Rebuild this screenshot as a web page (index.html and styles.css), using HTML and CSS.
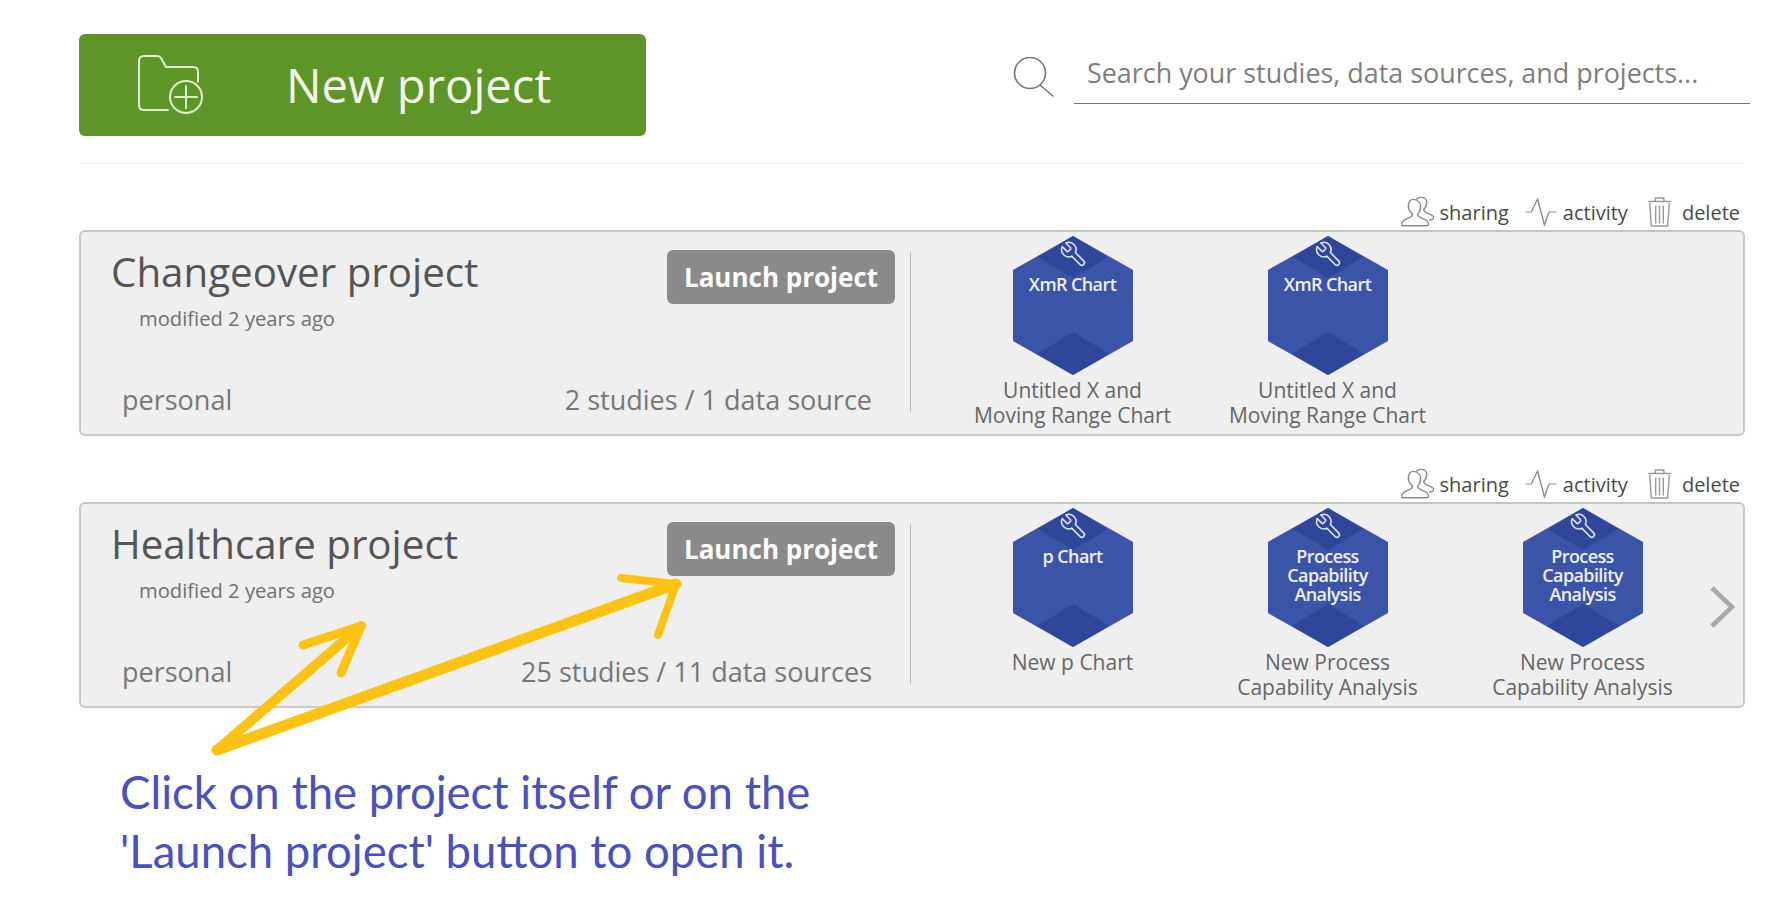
FILE: index.html
```html
<!DOCTYPE html>
<html lang="en">
<head>
<meta charset="utf-8">
<title>Projects</title>
<link rel="stylesheet" href="styles.css">
</head>
<body>
<svg width="0" height="0" class="defs">
  <defs>
    <g id="hexagon">
      <polygon points="60,0 120,34 120,105 60,139 0,105 0,34" fill="#3c54a8"/>
      <polygon points="60,0 95,21 60,42 25,21" fill="#30469a"/>
      <polygon points="60,96 96,118 60,139 24,118" fill="#30469a"/>
      <g transform="translate(75 4) scale(-1.2 1.2)" fill="none" stroke="#dfe5f5" stroke-width="1.3" stroke-linejoin="round">
        <path d="M14.7 6.3a1 1 0 0 0 0 1.4l1.6 1.6a1 1 0 0 0 1.4 0l3.77-3.77a6 6 0 0 1-7.94 7.94l-6.91 6.91a2.12 2.12 0 0 1-3-3l6.91-6.91a6 6 0 0 1 7.94-7.94l-3.76 3.76z"/>
      </g>
    </g>
    <g id="i-users" fill="none" stroke="#8c8c8c" stroke-width="1.2" stroke-linejoin="round" stroke-linecap="round">
      <path d="M14 3.500c3.500-3 8-1 8 3.500 0 2.500-1 4.500-2.500 6 0 1.500 1 2 3 3 2.500 1 4.500 2 5.500 3.500-.3 1.500-1.500 2.500-3.500 2.500"/>
      <path d="M11 4c4 0 6 3 6 6.500 0 3-1 5-2.500 6.500 0 1.500 1.500 2.500 4 3.500 3 1.200 4.500 2.500 5 4.500 .2 1-.3 2-1.500 2H3c-1.500 0-2-1-1.500-2 .7-2 2.500-3.400 5-4.500 2.500-1 4-2 4-3.500C9 15.500 7 13.500 7 10.500 7 7 8 4 11 4z"/>
    </g>
    <g id="i-activity" fill="none" stroke="#8c8c8c" stroke-width="1.2" stroke-linejoin="miter" stroke-linecap="round">
      <path d="M1 14h4.500L11 1l6 26 4-13h6"/>
    </g>
    <g id="i-trash" fill="none" stroke="#9a9a9a" stroke-width="1.3" stroke-linejoin="round">
      <path d="M2 5.500h21M8.500 5V2h8v3M3.500 7l1.500 23h15l1.500-23"/>
      <path d="M9 9.500v18M12.500 9.500v18M16 9.500v18"/>
    </g>
  </defs>
</svg>

<main class="page">
  <header class="topbar">
    <button class="new-project" type="button">
      <svg class="folder-icon" viewBox="0 0 65 60" width="65" height="60" fill="none" stroke="#e0f0cc" stroke-width="2" stroke-linejoin="round" stroke-linecap="round">
        <path d="M30 55H6c-3 0-5-2-5-5V6c0-3 2-5 5-5h13c2 0 3 .5 4 2l5 9h27c3 0 5 2 5 5v10"/>
        <circle cx="48" cy="42" r="16"/>
        <path d="M48 31v22M37 42h22"/>
      </svg>
      <span class="new-project-label">New project</span>
    </button>
    <div class="search">
      <svg class="search-icon" viewBox="0 0 41 40" width="41" height="40" fill="none" stroke="#777" stroke-width="1.600" stroke-linecap="round">
        <circle cx="17" cy="16" r="15.500"/>
        <path d="M27 28L40 39"/>
      </svg>
      <div class="search-field">Search your studies, data sources, and projects...</div>
    </div>
  </header>
  <div class="rule"></div>

  <section class="project">
    <nav class="actions">
      <span class="action"><svg class="ic-users" viewBox="1 1 27 28" width="33" height="32" preserveAspectRatio="none"><use href="#i-users"/></svg>sharing</span>
      <span class="action"><svg class="ic-activity" viewBox="0 0 28 28" width="32" height="28" preserveAspectRatio="none"><use href="#i-activity"/></svg>activity</span>
      <span class="action action-delete"><svg class="ic-trash" viewBox="1 0 23 32" width="25" height="32" preserveAspectRatio="none"><use href="#i-trash"/></svg>delete</span>
    </nav>
    <article class="card">
      <div class="card-info">
        <div class="card-head">
          <h2 class="title">Changeover project</h2>
          <button class="launch" type="button">Launch project</button>
        </div>
        <div class="modified">modified 2 years ago</div>
        <div class="card-foot">
          <span>personal</span>
          <span>2 studies / 1 data source</span>
        </div>
      </div>
      <div class="studies">
        <div class="study">
          <div class="hex"><svg viewBox="0 0 120 139" width="120" height="139"><use href="#hexagon"/></svg><span class="hex-label">XmR Chart</span></div>
          <p class="caption">Untitled X and<br>Moving Range Chart</p>
        </div>
        <div class="study">
          <div class="hex"><svg viewBox="0 0 120 139" width="120" height="139"><use href="#hexagon"/></svg><span class="hex-label">XmR Chart</span></div>
          <p class="caption">Untitled X and<br>Moving Range Chart</p>
        </div>
      </div>
    </article>
  </section>

  <section class="project">
    <nav class="actions">
      <span class="action"><svg class="ic-users" viewBox="1 1 27 28" width="33" height="32" preserveAspectRatio="none"><use href="#i-users"/></svg>sharing</span>
      <span class="action"><svg class="ic-activity" viewBox="0 0 28 28" width="32" height="28" preserveAspectRatio="none"><use href="#i-activity"/></svg>activity</span>
      <span class="action action-delete"><svg class="ic-trash" viewBox="1 0 23 32" width="25" height="32" preserveAspectRatio="none"><use href="#i-trash"/></svg>delete</span>
    </nav>
    <article class="card">
      <div class="card-info">
        <div class="card-head">
          <h2 class="title">Healthcare project</h2>
          <button class="launch" type="button">Launch project</button>
        </div>
        <div class="modified">modified 2 years ago</div>
        <div class="card-foot">
          <span>personal</span>
          <span>25 studies / 11 data sources</span>
        </div>
      </div>
      <div class="studies">
        <div class="study">
          <div class="hex"><svg viewBox="0 0 120 139" width="120" height="139"><use href="#hexagon"/></svg><span class="hex-label">p Chart</span></div>
          <p class="caption">New p Chart</p>
        </div>
        <div class="study">
          <div class="hex"><svg viewBox="0 0 120 139" width="120" height="139"><use href="#hexagon"/></svg><span class="hex-label">Process<br>Capability<br>Analysis</span></div>
          <p class="caption">New Process<br>Capability Analysis</p>
        </div>
        <div class="study">
          <div class="hex"><svg viewBox="0 0 120 139" width="120" height="139"><use href="#hexagon"/></svg><span class="hex-label">Process<br>Capability<br>Analysis</span></div>
          <p class="caption">New Process<br>Capability Analysis</p>
        </div>
      </div>
      <svg class="chevron" viewBox="0 0 26 42" width="26" height="42" fill="none" stroke="#a8a8a8" stroke-width="4.500"><path d="M3 2l20 19L3 40"/></svg>
    </article>
  </section>

  <p class="note">Click on the project itself or on the<br>'Launch project' button to open it.</p>
</main>

<svg class="arrows" viewBox="0 0 1792 913" width="1792" height="913" fill="none" stroke="#fdc312" stroke-linecap="round" stroke-linejoin="round">
  <path d="M217 750L676 584" stroke-width="11"/>
  <path d="M621 578L676 584L658 635" stroke-width="8"/>
  <path d="M217 750L361 626" stroke-width="10"/>
  <path d="M303 645L361 626L341 673" stroke-width="9"/>
</svg>
</body>
</html>
```
FILE: styles.css
```css
* { box-sizing: border-box; }
html, body { margin: 0; padding: 0; }
body {
  width: 1792px;
  height: 913px;
  overflow: hidden;
  background: #fff;
  font-family: "Open Sans", "Liberation Sans", sans-serif;
  color: #666;
  position: relative;
}
.defs { position: absolute; }
.page { padding: 34px 42px 0 79px; }

.topbar {
  display: flex;
  justify-content: space-between;
  height: 102px;
}
.new-project {
  width: 567px;
  height: 102px;
  display: flex;
  align-items: center;
  padding: 0 0 0 59px;
  border: 0;
  border-radius: 6px;
  background: #5e9528;
  font: inherit;
  color: #f2f9ea;
}
.new-project-label {
  margin-left: 83px;
  font-size: 47.200px;
  line-height: 1;
  position: relative;
  top: 1px;
}
.folder-icon { flex: none; }

.search {
  display: flex;
  align-items: flex-start;
  width: 737px;
  padding-top: 23px;
}
.search-icon { flex: none; margin-right: 20px; }
.search-field {
  flex: 1;
  height: 47px;
  padding: 2px 0 0 13px;
  border-bottom: 1px solid #777;
  font-size: 26.900px;
  line-height: 28px;
  color: #7e7e7e;
  white-space: nowrap;
}

.rule {
  height: 1px;
  margin: 27px 5px 0 0;
  background: #f3f3f3;
}

.project { margin-right: 5px; }
.actions {
  display: flex;
  justify-content: flex-end;
  align-items: center;
  gap: 16px;
  height: 66px;
  padding: 30px 5px 0 0;
  font-size: 20px;
  color: #4a4a4a;
}
.action { display: flex; align-items: center; gap: 6px; }
.action-delete { gap: 10px; margin-left: 3px; }

.card {
  display: flex;
  height: 206px;
  border: 2px solid #c9c9c9;
  border-top-color: #c4c4c4;
  border-radius: 6px;
  background: #efefef;
  position: relative;
}
.card-info {
  width: 830px;
  flex: none;
  height: 160px;
  margin-top: 20px;
  padding: 0 15px 0 30px;
  border-right: 1px solid #bdbdbd;
  display: flex;
  flex-direction: column;
}
.card-head {
  display: flex;
  justify-content: space-between;
  align-items: flex-start;
  height: 54px;
}
.title {
  margin: 0;
  font-size: 40.300px;
  font-weight: 400;
  line-height: 40px;
  color: #555;
  position: relative;
  top: 0;
}
.launch {
  width: 228px;
  height: 54px;
  margin-top: -2px;
  border: 0;
  border-radius: 6px;
  background: #8a8a8a;
  color: #fff;
  font: inherit;
  font-size: 26px;
  font-weight: 700;
}
.modified {
  margin: -1px 0 0 28px;
  font-size: 20.200px;
  line-height: 26px;
  color: #707070;
}
.card-foot {
  display: flex;
  justify-content: space-between;
  margin: auto 0 -3px;
  padding: 0 23px 0 11px;
  font-size: 27px;
  line-height: 30px;
  color: #777;
}

.studies {
  display: flex;
  padding: 4px 0 0 34px;
}
.study {
  width: 255px;
  display: flex;
  flex-direction: column;
  align-items: center;
}
.hex {
  display: grid;
  width: 120px;
  height: 139px;
}
.hex > * { grid-area: 1 / 1; }
.hex-label {
  padding-top: 39px;
  font-size: 18px;
  line-height: 19px;
  letter-spacing: -0.600px;
  font-weight: 600;
  color: #eef1fb;
  text-align: center;
}
.caption {
  margin: 3px 0 0;
  font-size: 21px;
  line-height: 25px;
  color: #666;
  text-align: center;
  white-space: nowrap;
}
.chevron {
  position: absolute;
  right: 8px;
  top: 82px;
}

.note {
  margin: 54px 0 0 41px;
  font-family: Lato, "Open Sans", sans-serif;
  font-size: 45.500px;
  line-height: 59px;
  color: #4a50bd;
}

.arrows {
  position: absolute;
  left: 0;
  top: 0;
  pointer-events: none;
}
```
